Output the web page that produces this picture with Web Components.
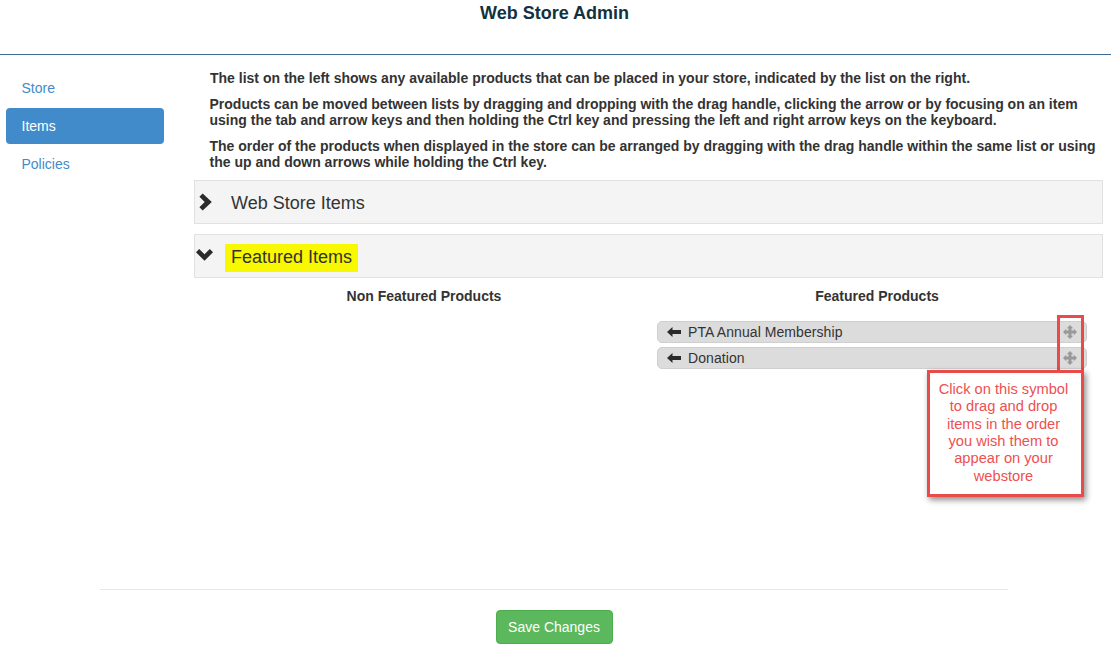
<!DOCTYPE html>
<html lang="en">
<head>
<meta charset="utf-8">
<title>Web Store Admin</title>
<style>
  html, body { margin: 0; padding: 0; background: #fff; }
  body { font-family: "Liberation Sans", Arial, sans-serif; font-size: 14px; color: #333; }
</style>
</head>
<body>
<admin-page>
  <store-header slot="header">Web Store Admin</store-header>

  <side-nav slot="nav">
    <nav-pill>Store</nav-pill>
    <nav-pill active>Items</nav-pill>
    <nav-pill>Policies</nav-pill>
  </side-nav>

  <help-text slot="main">
    <p>The list on the left shows any available products that can be placed in your store, indicated by the list on the right.</p>
    <p>Products can be moved between lists by dragging and dropping with the drag handle, clicking the arrow or by focusing on an item using the tab and arrow keys and then holding the Ctrl key and pressing the left and right arrow keys on the keyboard.</p>
    <p>The order of the products when displayed in the store can be arranged by dragging with the drag handle within the same list or using the up and down arrows while holding the Ctrl key.</p>
  </help-text>

  <accordion-panel slot="main" title-text="Web Store Items"></accordion-panel>
  <accordion-panel slot="main" title-text="Featured Items" open highlight></accordion-panel>

  <product-lists slot="main">
    <product-list slot="left" heading="Non Featured Products"></product-list>
    <product-list slot="right" heading="Featured Products">
      <product-item>PTA Annual Membership</product-item>
      <product-item>Donation</product-item>
      <drag-callout>Click on this symbol to drag and drop items in the order you wish them to appear on your webstore</drag-callout>
    </product-list>
  </product-lists>

  <save-bar slot="footer">Save Changes</save-bar>
</admin-page>

<script>
class AdminPage extends HTMLElement {
  constructor() {
    super();
    this.attachShadow({ mode: "open" }).innerHTML = `
      <style>
        :host { display: block; }
        .body { display: grid; grid-template-columns: 158px 909px; column-gap: 30px; padding: 15px 0 0 6px; }
        .main { display: block; min-height: 519px; }
      </style>
      <slot name="header"></slot>
      <div class="body">
        <div><slot name="nav"></slot></div>
        <div class="main"><slot name="main"></slot></div>
      </div>
      <slot name="footer"></slot>
    `;
  }
}

class StoreHeader extends HTMLElement {
  constructor() {
    super();
    this.attachShadow({ mode: "open" }).innerHTML = `
      <style>
        :host {
          display: block;
          box-sizing: border-box;
          height: 55px;
          padding: 3px 2px 0 0;
          border-bottom: 1px solid #3b6a94;
          text-align: center;
          font-size: 18px;
          font-weight: bold;
          line-height: 20px;
          color: #12323f;
        }
      </style>
      <slot></slot>
    `;
  }
}

class SideNav extends HTMLElement {
  constructor() {
    super();
    this.attachShadow({ mode: "open" }).innerHTML = `
      <style>
        :host { display: flex; flex-direction: column; gap: 2px; }
      </style>
      <slot></slot>
    `;
  }
}

class NavPill extends HTMLElement {
  constructor() {
    super();
    this.attachShadow({ mode: "open" }).innerHTML = `
      <style>
        :host {
          display: block;
          height: 36px;
          padding: 0 15px 0 15.5px;
          border-radius: 4px;
          line-height: 36px;
          font-size: 14px;
          color: #428bca;
        }
        :host([active]) { background: #428bca; color: #fff; }
      </style>
      <slot></slot>
    `;
  }
}

class HelpText extends HTMLElement {
  constructor() {
    super();
    this.attachShadow({ mode: "open" }).innerHTML = `
      <style>
        :host { display: block; padding: 0 0 0 15.5px; margin-bottom: 2px; }
        ::slotted(p) {
          margin: 0 0 10px;
          font-size: 14px;
          font-weight: bold;
          line-height: 16px;
          color: #333;
        }
        ::slotted(p:first-child) { padding-left: .5px; }
      </style>
      <slot></slot>
    `;
  }
}

class AccordionPanel extends HTMLElement {
  constructor() {
    super();
    const open = this.hasAttribute("open");
    const chevron = open
      ? '<path d="M0 5.3 3.2 2 8.5 7.3 13.8 2 17 5.3 8.5 13.8Z"/>'
      : '<path d="M5.7 0.5 14.8 9 5.7 17.5 2.4 14.3 7.7 9 2.4 3.7Z"/>';
    this.attachShadow({ mode: "open" }).innerHTML = `
      <style>
        :host {
          display: flex;
          align-items: center;
          box-sizing: border-box;
          height: 44px;
          margin-bottom: 10px;
          border: 1px solid #e1e1e1;
          background: #f4f4f4;
          font-size: 18px;
          color: #333;
        }
        svg { width: 18px; height: 18px; margin-left: 2px; fill: #2b2b2b; flex: none; }
        :host([open]) svg { margin-left: 1px; }
        .title { margin: 2px 0 0 10px; padding: 0 6px; line-height: 28px; }
        :host([highlight]) .title { margin: 4px 0 0 11px; padding-bottom: 2px; line-height: 26px; background: #f8f800; }
      </style>
      <svg viewBox="0 0 18 18">${chevron}</svg>
      <span class="title">${this.getAttribute("title-text")}</span>
    `;
  }
}

class ProductLists extends HTMLElement {
  constructor() {
    super();
    this.attachShadow({ mode: "open" }).innerHTML = `
      <style>
        :host { display: grid; grid-template-columns: 460px 446px; margin-top: -2px; }
      </style>
      <slot name="left"></slot>
      <slot name="right"></slot>
    `;
  }
}

class ProductList extends HTMLElement {
  constructor() {
    super();
    this.attachShadow({ mode: "open" }).innerHTML = `
      <style>
        :host { display: block; position: relative; }
        h4 {
          margin: 0 0 15px;
          text-align: center;
          font-size: 14px;
          font-weight: bold;
          line-height: 20px;
          color: #333;
        }
        .items { display: flex; flex-direction: column; gap: 4px; margin: 0 13px 0 3px; }
      </style>
      <h4>${this.getAttribute("heading")}</h4>
      <div class="items"><slot></slot></div>
    `;
  }
}

class ProductItem extends HTMLElement {
  constructor() {
    super();
    this.attachShadow({ mode: "open" }).innerHTML = `
      <style>
        :host {
          display: flex;
          align-items: center;
          box-sizing: border-box;
          height: 22px;
          border: 1px solid #cfcfcf;
          border-radius: 5px;
          background: #dcdcdc;
          font-size: 14px;
          letter-spacing: .07px;
          color: #333;
        }
        .arrow { width: 14px; height: 14px; margin-left: 9px; fill: #2b2b2b; flex: none; }
        .label { flex: 1; margin-left: 7px; }
        .move { width: 14px; height: 14px; margin-right: 9px; fill: #999; flex: none; }
      </style>
      <svg class="arrow" viewBox="0 0 14 14"><path d="M0 7 5.5 2V5H14V9H5.5V12Z"/></svg>
      <span class="label"><slot></slot></span>
      <svg class="move" viewBox="0 0 14 14"><path d="M7 0 10.2 3.2H8.5V5.5H10.8V3.8L14 7 10.8 10.2V8.5H8.5V10.8H10.2L7 14 3.8 10.8H5.5V8.5H3.2V10.2L0 7 3.2 3.8V5.5H5.5V3.2H3.8Z"/></svg>
    `;
  }
}

// red annotation drawn over the list: frame round the handles plus the note box
class DragCallout extends HTMLElement {
  constructor() {
    super();
    this.attachShadow({ mode: "open" }).innerHTML = `
      <style>
        :host { display: block; }
        .frame {
          position: absolute;
          left: 403px;
          top: 29px;
          width: 21px;
          height: 52px;
          border: 3px solid #e94b4b;
          border-bottom: 0;
        }
        .note {
          position: absolute;
          left: 273px;
          top: 84px;
          width: 151px;
          height: 121px;
          border: 3px solid #e94b4b;
          background: #fff;
          box-shadow: 2px 3px 6px rgba(0, 0, 0, .45);
          display: flex;
          align-items: center;
          justify-content: center;
          text-align: center;
          font-size: 14.67px;
          line-height: 17.3px;
          color: #ee5050;
        }
        .note span { display: block; width: 132px; margin: 0 4px 1px 0; }
      </style>
      <div class="frame"></div>
      <div class="note"><span><slot></slot></span></div>
    `;
  }
}

class SaveBar extends HTMLElement {
  constructor() {
    super();
    this.attachShadow({ mode: "open" }).innerHTML = `
      <style>
        :host {
          display: block;
          margin: 0 103px 0 100px;
          padding-top: 20px;
          border-top: 1px solid #e8e8e8;
          text-align: center;
        }
        button {
          box-sizing: border-box;
          height: 34px;
          width: 117px;
          padding: 0;
          border: 1px solid #4cae4c;
          border-radius: 4px;
          background: #5cb85c;
          color: #fff;
          font: 14px "Liberation Sans", Arial, sans-serif;
        }
      </style>
      <button type="button"><slot></slot></button>
    `;
  }
}

customElements.define("admin-page", AdminPage);
customElements.define("store-header", StoreHeader);
customElements.define("side-nav", SideNav);
customElements.define("nav-pill", NavPill);
customElements.define("help-text", HelpText);
customElements.define("accordion-panel", AccordionPanel);
customElements.define("product-lists", ProductLists);
customElements.define("product-list", ProductList);
customElements.define("product-item", ProductItem);
customElements.define("drag-callout", DragCallout);
customElements.define("save-bar", SaveBar);
</script>
</body>
</html>
